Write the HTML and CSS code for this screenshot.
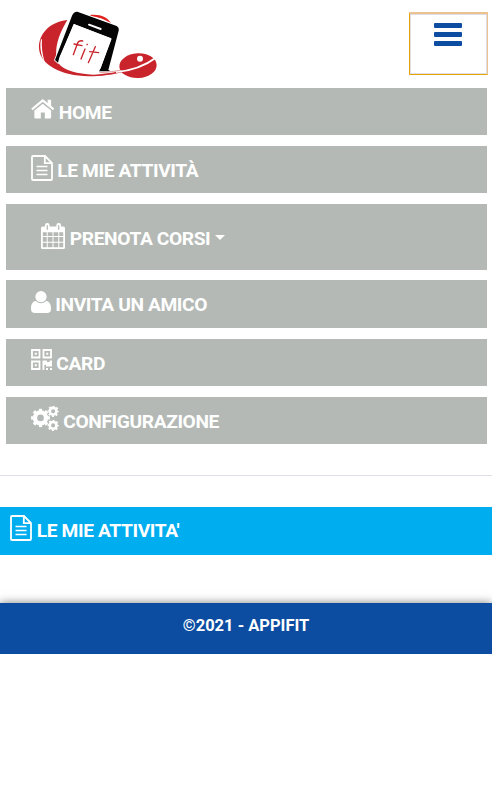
FILE: index.html
```html
<!DOCTYPE html>
<html lang="it">
<head>
  <meta charset="UTF-8" />
  <meta name="viewport" content="width=device-width, initial-scale=1.0"/>
  <title>Appifit</title>
  <link rel="stylesheet" href="styles.css">
</head>
<body>
  <!-- shared icons -->
  <svg class="sprite" aria-hidden="true">
    <symbol id="file" viewBox="0 0 22 26">
      <path d="M2 1H14L21 8V24a1 1 0 0 1-1 1H2A1 1 0 0 1 1 24V2A1 1 0 0 1 2 1ZM13.800 1V8.200H21" fill="none" stroke="currentColor" stroke-width="1.800"/>
      <path d="M5.500 11.500H16.500M5.500 15.500H16.500M5.500 19.500H16.500" stroke="currentColor" stroke-width="1.700"/>
    </symbol>
    <symbol id="cog" viewBox="-10 -10 20 20">
      <circle r="5.800" fill="none" stroke="currentColor" stroke-width="4.600"/>
      <circle r="8.600" fill="none" stroke="currentColor" stroke-width="2.600" pathLength="16" stroke-dasharray="1 1" stroke-dashoffset=".5"/>
    </symbol>
  </svg>

  <header class="header">
    <svg class="logo" viewBox="0 0 420 270">
      <path d="M112 60C56 66 25 105 27 145C30 194 93 228 176 229C247 229 333 207 377 176C336 199 252 221 190 224C142 222 104 213 85 190C68 150 88 100 112 60Z" fill="#c9242b"/>
      <path d="M33 118C28 139 33 169 44 186C37 161 34 142 36 118Z" fill="#fff"/>
      <path d="M181 45C211 42 234 53 243 70C226 58 205 51 181 48Z" fill="#e0231f"/>
      <path d="M142 35L260 78Q268 83 266 92L235 210L242 214H205L212 204L245 116L132 72L89 170L84 188L75 180L126 47Q132 34 142 35Z" fill="#050505" stroke="#fff" stroke-width="5" paint-order="stroke"/>
      <path d="M131 72L244 115L212 204L206 216L90 186L86 181Z" fill="#fff"/>
      <path d="M177 74L212 87" stroke="#fff" stroke-width="6" stroke-linecap="round"/>
      <path class="fit" d="M130 164L142 131Q147 120 158 123M132 132L156 137M153 177L165 147M171 134L172 133M175 188L196 140M179 155L206 158"/>
      <ellipse cx="324" cy="197" rx="56" ry="37" transform="rotate(-3 324 197)" fill="#c9242b"/>
      <path d="M258 216Q327 211 381 171" fill="none" stroke="#fff" stroke-width="6"/>
      <circle cx="330" cy="176" r="9" fill="#fff"/>
      <path d="M209 218Q239 217 270 211" fill="none" stroke="#e4a0a2" stroke-width="3"/>
    </svg>
    <button class="toggler" aria-label="Menu">
      <span class="bar"></span>
      <span class="bar"></span>
      <span class="bar"></span>
    </button>
  </header>

  <nav class="menu">
    <a class="item">
      <svg class="icon home" viewBox="0 0 23 19">
        <path d="M11.500 4.500L19.700 11.300V18a1 1 0 0 1-1 1H13.500V13.200H9.600V19H4.300a1 1 0 0 1-1-1V11.300Z" fill="currentColor"/>
        <path d="M.9 10.100L11.500 1.400L22.100 10.100" fill="none" stroke="currentColor" stroke-width="2.100"/>
        <path d="M16.300 .6H19.700V8L16.300 5.200Z" fill="currentColor"/>
      </svg>
      HOME
    </a>
    <a class="item">
      <svg class="icon file"><use href="#file"/></svg>
      LE MIE ATTIVITÀ
    </a>
    <a class="item dropdown">
      <svg class="icon calendar" viewBox="0 0 24 26">
        <path fill-rule="evenodd" fill="currentColor" d="M1.500 3.500H22.500A1.500 1.500 0 0 1 24 5V24.500A1.500 1.500 0 0 1 22.500 26H1.500A1.500 1.500 0 0 1 0 24.500V5A1.500 1.500 0 0 1 1.500 3.500ZM1.800 9.300V13.100H5.700V9.300ZM6.700 9.300V13.100H11.500V9.300ZM12.500 9.300V13.100H17.300V9.300ZM18.300 9.300V13.100H22.200V9.300ZM1.800 14.100V18.700H5.700V14.100ZM6.700 14.100V18.700H11.500V14.100ZM12.500 14.100V18.700H17.300V14.100ZM18.300 14.100V18.700H22.200V14.100ZM1.800 19.700V24.200H5.700V19.700ZM6.700 19.700V24.200H11.500V19.700ZM12.500 19.700V24.200H17.300V19.700ZM18.300 19.700V24.200H22.200V19.700Z"/>
        <rect x="4" y="0" width="4.600" height="8" rx="2.100" fill="currentColor"/>
        <rect x="15.400" y="0" width="4.600" height="8" rx="2.100" fill="currentColor"/>
        <path d="M6.300 2.500V6.300M17.700 2.500V6.300" stroke="#b4b9b5" stroke-width="1.200" stroke-linecap="round"/>
      </svg>
      PRENOTA CORSI
      <i class="caret"></i>
    </a>
    <a class="item">
      <svg class="icon user" viewBox="0 0 20 22">
        <circle cx="10" cy="5.700" r="5.600" fill="currentColor"/>
        <path d="M4.900 9.900Q7 12.200 10 12.200T15.100 9.900C19 10.200 20 14 20 17.700Q20 22 16 22H4Q0 22 0 17.700C0 14 1 10.200 4.900 9.900Z" fill="currentColor"/>
      </svg>
      INVITA UN AMICO
    </a>
    <a class="item">
      <svg class="icon qrcode" viewBox="0 0 21 21">
        <path d="M1 1H8.500V8.500H1ZM12.500 1H20V8.500H12.500ZM1 12.500H8.500V20H1Z" fill="none" stroke="currentColor" stroke-width="1.800"/>
        <path d="M3.700 3.700h2.100v2.100h-2.100ZM15.200 3.700h2.100v2.100h-2.100ZM3.700 15.200h2.100v2.100h-2.100ZM11.500 11.500h4.500v1.600h2.600v-1.600H21v6h-6v-1.700h-1.600V21H11.500ZM15 19h2v2h-2ZM19 19h2v2h-2Z" fill="currentColor"/>
      </svg>
      CARD
    </a>
    <a class="item">
      <svg class="icon cogs" viewBox="0 0 28 25">
        <use href="#cog" x="0" y="2.400" width="19" height="19"/>
        <use href="#cog" x="16.300" y="-.5" width="11.600" height="11.600"/>
        <use href="#cog" x="16.300" y="13.600" width="11.600" height="11.600"/>
      </svg>
      CONFIGURAZIONE
    </a>
  </nav>

  <hr class="divider">

  <h1 class="title">
    <svg class="icon file"><use href="#file"/></svg>
    LE MIE ATTIVITA'
  </h1>

  <footer class="footer">©2021 - APPIFIT</footer>
</body>
</html>
```

FILE: styles.css
```css
* {
  box-sizing: border-box;
}
body {
  margin: 0;
  background: #fff;
  font-family: Roboto, "Liberation Sans", sans-serif;
  font-weight: 700;
  color: #fff;
}
.sprite {
  display: none;
}

/* logo and menu button */
.header {
  display: flex;
  justify-content: space-between;
  align-items: flex-start;
  height: 87.500px;
  padding: 0 4px 0 30px;
}
.logo {
  width: 140px;
  height: 90px;
}
.toggler {
  display: flex;
  flex-direction: column;
  align-items: center;
  gap: 4.500px;
  width: 79px;
  height: 63px;
  margin-top: 12px;
  padding: 9px 2px 0 0;
  background: #fff;
  border: 1px solid #e5a50a;
  border-top: 2px solid #ebc391;
  border-right-color: #ebc391;
  border-radius: 1px;
  box-shadow: inset 0 0 0 1px #dedee2;
}
.bar {
  width: 28px;
  height: 4.700px;
  background: #0c4da2;
  border-radius: 1px;
}

/* menu */
.menu {
  display: flex;
  flex-direction: column;
  gap: 10.600px;
  padding: 0 5px 0 5.500px;
}
.item {
  height: 47.600px;
  padding: 7px 0 0 25px;
  background: #b4b9b5;
  font-size: 19.200px;
  letter-spacing: -.4px;
  line-height: 36px;
}
.dropdown {
  height: 66px;
  padding: 16.800px 0 0 35.500px;
}
.caret {
  display: inline-block;
  border: 5.500px solid transparent;
  border-top-color: #fff;
  border-bottom: 0;
  vertical-align: 5px;
}

/* icons */
.icon {
  margin-right: .5px;
}
.home { width: 23.500px; height: 19.500px; }
.file { width: 22px; height: 26px; vertical-align: -4px; }
.calendar { width: 24px; height: 26px; vertical-align: -4px; }
.user { width: 20px; height: 22px; vertical-align: -2px; }
.qrcode { width: 21px; height: 21px; }
.cogs { width: 28px; height: 25px; vertical-align: -3.500px; }

.divider {
  margin: 30.500px 0 31.200px;
  border: 0;
  border-top: 1px solid #dcdfe3;
}
.title {
  height: 48px;
  margin: 0;
  padding: 6px 0 0 10px;
  background: #00adef;
  font-size: 19.200px;
  letter-spacing: -.4px;
  line-height: 36px;
}
.footer {
  height: 51px;
  margin-top: 47.500px;
  background: #0c4da2;
  box-shadow: 0 0 9px rgba(0, 0, 0, .5);
  font-size: 16.500px;
  line-height: 46px;
  text-align: center;
}

/* lettering inside the phone */
.fit {
  fill: none;
  stroke: #c9242b;
  stroke-width: 4;
  stroke-linecap: round;
}
```
